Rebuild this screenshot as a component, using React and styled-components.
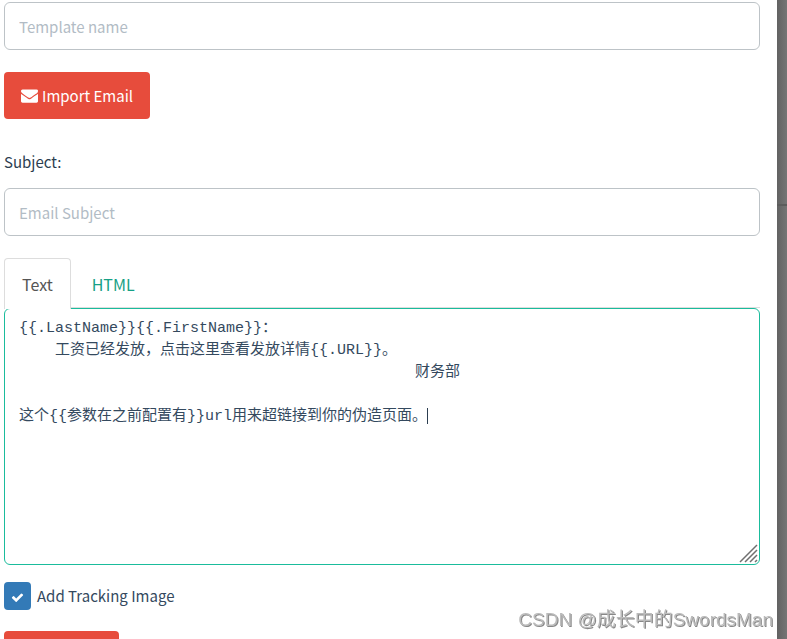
import React, { useEffect, useRef, useState } from 'react'
import styled, { createGlobalStyle } from 'styled-components'

const defaultText = [
  '{{.LastName}}{{.FirstName}}：',
  ' '.repeat(4) + '工资已经发放，点击这里查看发放详情{{.URL}}。',
  ' '.repeat(44) + '财务部',
  '',
  '这个{{参数在之前配置有}}url用来超链接到你的伪造页面。',
].join('\n')

const LATIN_WIDTH = 9
const WIDE_WIDTH = 15
const LINE_HEIGHT = 22

// column and row of the caret inside the editor, in pixels
const caretOffset = (value, index) => {
  const lines = value.slice(0, index).split('\n')
  const last = lines[lines.length - 1]
  const x = [...last].reduce((sum, c) => sum + (c.charCodeAt(0) > 255 ? WIDE_WIDTH : LATIN_WIDTH), 0)
  return { x, y: (lines.length - 1) * LINE_HEIGHT }
}

const EnvelopeIcon = () => (
  <svg width="17" height="17" viewBox="0 0 1792 1792" fill="currentColor" aria-hidden="true">
    <path d="M1792 710v794q0 66-47 113t-113 47h-1472q-66 0-113-47t-47-113v-794q44 49 101 87 362 246 497 345 57 42 92.5 65.5t94.5 48 110 24.5h2q51 0 110-24.5t94.5-48 92.5-65.5q170-123 498-345 57-39 100-87zm0-294q0 79-49 151t-122 123q-376 261-468 325-10 7-42.5 31t-54 38.5-52 32.5-57.5 27-50 9h-2q-23 0-50-9t-57.5-27-52-32.5-54-38.5-42.5-31q-91-64-262-182.5t-205-142.5q-62-42-117-115.5t-55-136.5q0-78 41.5-130t118.5-52h1472q65 0 112.5 47t47.5 113z" />
  </svg>
)

const CheckIcon = () => (
  <svg width="13" height="13" viewBox="0 0 1792 1792" fill="currentColor" aria-hidden="true">
    <path d="M1671 566q0 40-28 68l-724 724-136 136q-28 28-68 28t-68-28l-136-136-362-362q-28-28-28-68t28-68l136-136q28-28 68-28t68 28l294 295 656-657q28-28 68-28t68 28l136 136q28 28 28 68z" />
  </svg>
)

const App = () => {
  const [tab, setTab] = useState('text')
  const [text, setText] = useState(defaultText)
  const [html, setHtml] = useState('')
  const [tracking, setTracking] = useState(true)
  const [cursor, setCursor] = useState(defaultText.length)
  const editor = useRef(null)

  const value = tab === 'text' ? text : html
  const caret = caretOffset(value, cursor)

  useEffect(() => {
    const end = editor.current.value.length
    editor.current.focus()
    editor.current.setSelectionRange(end, end)
    setCursor(end)
  }, [tab])

  const handleChange = (e) => {
    setCursor(e.target.selectionEnd)
    if (tab === 'text') setText(e.target.value)
    else setHtml(e.target.value)
  }

  return (
    <Page>
      <GlobalStyle />
      <Modal>
        <TextInput placeholder="Template name" aria-label="Template name" />
        <ImportButton type="button">
          <EnvelopeIcon />
          Import Email
        </ImportButton>
        <Label htmlFor="subject">Subject:</Label>
        <TextInput id="subject" placeholder="Email Subject" />
        <Tabs role="tablist">
          <Tab type="button" role="tab" aria-selected={tab === 'text'} $active={tab === 'text'} onClick={() => setTab('text')}>Text</Tab>
          <Tab type="button" role="tab" aria-selected={tab === 'html'} $active={tab === 'html'} onClick={() => setTab('html')}>HTML</Tab>
        </Tabs>
        <EditorBox>
          <Editor
            ref={editor}
            aria-label="Email body"
            spellCheck={false}
            value={value}
            onChange={handleChange}
            onSelect={(e) => setCursor(e.target.selectionEnd)}
          />
          <Caret style={{ marginLeft: caret.x, marginTop: caret.y }} />
          <Grip width="19" height="19" viewBox="0 0 19 19" aria-hidden="true">
            <path d="M1 18L18 1M6 18L18 6M11 18L18 11M16 18L18 16" />
          </Grip>
        </EditorBox>
        <CheckLabel>
          <CheckInput type="checkbox" checked={tracking} onChange={(e) => setTracking(e.target.checked)} />
          <CheckBox>{tracking && <CheckIcon />}</CheckBox>
          Add Tracking Image
        </CheckLabel>
        <AddButton type="button" aria-label="Add Files" />
      </Modal>
      <Backdrop>
        <BackdropHead />
      </Backdrop>
      <Watermark>CSDN @成长中的SwordsMan</Watermark>
    </Page>
  )
}

const GlobalStyle = createGlobalStyle`
  * {
    box-sizing: border-box;
  }

  body {
    margin: 0;
    overflow: hidden;
    background: #fff;
    color: #34495e;
    font-family: "Noto Sans CJK SC", "Open Sans", sans-serif;
    font-size: 15px;
    line-height: 24px;
  }

  input, button, textarea {
    font: inherit;
  }
`

const Page = styled.div`
  display: flex;
  height: 100vh;
  overflow: hidden;
`

const Modal = styled.main`
  flex: 1;
  display: flex;
  flex-direction: column;
  align-items: flex-start;
  padding: 2px 17px 0 4px;
`

const Backdrop = styled.div`
  width: 10px;
  background: linear-gradient(to right, #626262, #757575);
`

const BackdropHead = styled.div`
  height: 206px;
  border-bottom: 2px solid #5c5c5c;
`

const TextInput = styled.input`
  flex-shrink: 0;
  width: 100%;
  height: 48px;
  padding: 0 14px;
  border: 1px solid #bdc3c7;
  border-radius: 6px;
  background: #fff;
  color: #34495e;
  outline: none;

  &::placeholder {
    color: #b2bcc5;
    opacity: 1;
  }
`

const Button = styled.button`
  flex-shrink: 0;
  height: 47px;
  border: none;
  border-radius: 4px;
  background: #e74c3c;
  color: #fff;
  cursor: pointer;
`

const ImportButton = styled(Button)`
  display: flex;
  align-items: center;
  gap: 4px;
  margin-top: 22px;
  padding: 0 17px;
`

const AddButton = styled(Button)`
  min-width: 115px;
  margin-top: 21px;
`

const Label = styled.label`
  margin: 31px 0 14px;
  color: #2c3e50;
`

const Tabs = styled.div`
  position: relative;
  z-index: 1;
  display: flex;
  width: 100%;
  margin-top: 22px;
  border-bottom: 1px solid #ddd;
`

const Tab = styled.button`
  height: 51px;
  margin: 0 3px -2px 0;
  padding: 0 17px;
  border: 1px solid ${(p) => (p.$active ? '#ddd' : 'transparent')};
  border-bottom: none;
  border-radius: 4px 4px 0 0;
  background: ${(p) => (p.$active ? '#fff' : 'transparent')};
  color: ${(p) => (p.$active ? '#555' : '#16a085')};
  font-size: 16px;
  cursor: pointer;
`

const EditorBox = styled.div`
  position: relative;
  width: 100%;
`

const Editor = styled.textarea`
  display: block;
  width: 100%;
  height: 257px;
  padding: 9px 14px;
  border: 1px solid #bdc3c7;
  border-radius: 6px;
  background: #fff;
  color: #34495e;
  caret-color: transparent;
  font-family: "Liberation Mono", "Noto Sans CJK SC", monospace;
  font-size: 15px;
  line-height: 22px;
  outline: none;
  resize: none;

  &:focus {
    border-color: #1abc9c;
  }
`

const Caret = styled.span`
  position: absolute;
  top: 12px;
  left: 15px;
  width: 1px;
  height: 16px;
  background: #2c3e50;
  visibility: hidden;
  pointer-events: none;

  ${Editor}:focus + & {
    visibility: visible;
  }
`

const Grip = styled.svg`
  position: absolute;
  right: 2px;
  bottom: 2px;
  fill: none;
  stroke: #707070;
  stroke-width: 1.5;
  pointer-events: none;
`

const CheckLabel = styled.label`
  display: flex;
  align-items: center;
  gap: 6px;
  margin-top: 17px;
  color: #34495e;
  cursor: pointer;
`

const CheckInput = styled.input`
  position: absolute;
  opacity: 0;
`

const CheckBox = styled.span`
  display: flex;
  align-items: center;
  justify-content: center;
  width: 27px;
  height: 28px;
  padding-top: 3px;
  border-radius: 4px;
  background: #337ab7;
  color: #fff;
`

const Watermark = styled.div`
  position: fixed;
  right: 14px;
  bottom: 7px;
  color: #bbb;
  font-family: "Liberation Sans", "Noto Sans CJK SC", sans-serif;
  font-size: 19px;
  text-shadow: 1px 1px 0 #888;
`

export default App
